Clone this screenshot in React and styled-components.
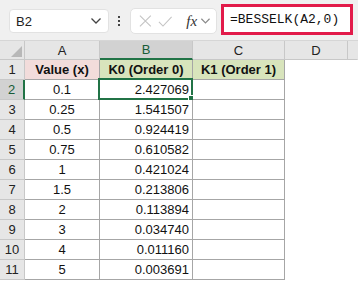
import styled, { createGlobalStyle } from "styled-components";

const GlobalStyle = createGlobalStyle`
  html, body {
    margin: 0;
    padding: 0;
    background: #fff;
  }
  body {
    font-family: "Liberation Sans", Arial, sans-serif;
    width: 358px;
    height: 282px;
    overflow: hidden;
  }
`;

const rows = [
  ["0.1", "2.427069"],
  ["0.25", "1.541507"],
  ["0.5", "0.924419"],
  ["0.75", "0.610582"],
  ["1", "0.421024"],
  ["1.5", "0.213806"],
  ["2", "0.113894"],
  ["3", "0.034740"],
  ["4", "0.011160"],
  ["5", "0.003691"],
];

function Chevron({ color = "#444" }) {
  return (
    <svg width="12" height="8" viewBox="0 0 12 8">
      <path d="M1.5 1.5 L6 6 L10.5 1.5" fill="none" stroke={color} strokeWidth="1.3" />
    </svg>
  );
}

function App() {
  return (
    <Page>
      <GlobalStyle />
      <Toolbar>
        <NameBox>
          <span>B2</span>
          <Chevron />
        </NameBox>
        <Dots>
          <i />
          <i />
          <i />
        </Dots>
        <FxBox>
          <svg width="14" height="14" viewBox="0 0 14 14">
            <path d="M1 1 L13 13 M13 1 L1 13" stroke="#c4c4c4" strokeWidth="1.2" />
          </svg>
          <svg width="16" height="13" viewBox="0 0 16 13">
            <path d="M1 7 L5.5 11.5 L15 1.5" fill="none" stroke="#c4c4c4" strokeWidth="1.2" />
          </svg>
          <FxLabel>fx</FxLabel>
          <Chevron color="#8a8a8a" />
        </FxBox>
        <Formula>=BESSELK(A2,0)</Formula>
      </Toolbar>

      <Sheet>
        <Corner />
        <ColHead>A</ColHead>
        <ColHead $active>B</ColHead>
        <ColHead>C</ColHead>
        <ColHead>D</ColHead>
        <ColHead $last />

        <RowHead>1</RowHead>
        <Cell $bg="#f2dcdb" $bold $align="center">Value (x)</Cell>
        <Cell $bg="#d8e4bc" $bold $align="center">K0 (Order 0)</Cell>
        <Cell $bg="#d8e4bc" $bold $align="center">K1 (Order 1)</Cell>
        <Blank />
        <Blank />

        {rows.map(([x, k0], i) => {
          const n = i + 2;
          return [
            <RowHead key={`h${n}`} $active={n === 2}>{n}</RowHead>,
            <Cell key={`a${n}`} $align="center">{x}</Cell>,
            <Cell key={`b${n}`} $align="right">
              {k0}
              {n === 2 && (
                <Selection>
                  <Handle />
                </Selection>
              )}
            </Cell>,
            <Cell key={`c${n}`} />,
            <Blank key={`d${n}`} />,
            <Blank key={`e${n}`} />,
          ];
        })}
      </Sheet>
    </Page>
  );
}

const Page = styled.div`
  width: 358px;
  height: 282px;
  overflow: hidden;
  display: flex;
  flex-direction: column;
`;

const Toolbar = styled.div`
  height: 40px;
  flex-shrink: 0;
  background: #f0f0f0;
  border-bottom: 1px solid #d6d6d6;
  display: flex;
  align-items: flex-start;
  box-sizing: border-box;
  height: 41px;
`;

const NameBox = styled.div`
  margin: 9px 0 0 9px;
  width: 100px;
  height: 24px;
  box-sizing: border-box;
  background: #fff;
  border: 1px solid #e2e2e2;
  border-radius: 4px;
  display: flex;
  align-items: center;
  justify-content: space-between;
  padding: 0 6px 0 6px;
  font-size: 13px;
  color: #222;
`;

const Dots = styled.div`
  margin: 16px 0 0 9px;
  width: 3px;
  display: flex;
  flex-direction: column;
  gap: 2px;
  i {
    display: block;
    width: 2px;
    height: 2px;
    background: #444;
  }
`;

const FxBox = styled.div`
  margin: 8px 0 0 9px;
  width: 87px;
  height: 26px;
  box-sizing: border-box;
  background: #fff;
  border: 1px solid #e2e2e2;
  border-radius: 5px;
  display: flex;
  align-items: center;
  gap: 6px;
  padding: 0 5px 0 8px;
`;

const FxLabel = styled.span`
  font-family: "Liberation Serif", "Times New Roman", serif;
  font-style: italic;
  font-size: 15px;
  color: #333;
  margin-left: 8px;
  margin-right: -3px;
`;

const Formula = styled.div`
  margin: 4px 0 0 4px;
  width: 132px;
  height: 31px;
  box-sizing: border-box;
  background: #fff;
  border: 3px solid #e21b4a;
  display: flex;
  align-items: center;
  padding-left: 6px;
  font-family: "Liberation Mono", "DejaVu Sans Mono", monospace;
  font-size: 13px;
  color: #111;
`;

const Sheet = styled.div`
  display: grid;
  grid-template-columns: 25px 75px 93px 92px 63px 1fr;
  grid-template-rows: 19px repeat(11, 20px);
  font-size: 13px;
  color: #111;
`;

const Corner = styled.div`
  background: #e6e6e6;
  border-right: 1px solid #c8c8c8;
  border-bottom: 1px solid #c8c8c8;
  position: relative;
  &::after {
    content: "";
    position: absolute;
    right: 2px;
    bottom: 2px;
    border-style: solid;
    border-width: 0 0 11px 11px;
    border-color: transparent transparent #b8b8b8 transparent;
  }
`;

const ColHead = styled.div`
  background: ${(p) => (p.$active ? "#d2d2d2" : "#e6e6e6")};
  color: ${(p) => (p.$active ? "#185c37" : "#222")};
  border-right: 1px solid ${(p) => (p.$last ? "transparent" : "#c8c8c8")};
  border-bottom: ${(p) => (p.$active ? "2px solid #217346" : "1px solid #c8c8c8")};
  display: flex;
  align-items: center;
  justify-content: center;
  box-sizing: border-box;
`;

const RowHead = styled.div`
  background: ${(p) => (p.$active ? "#d2d2d2" : "#e6e6e6")};
  color: ${(p) => (p.$active ? "#185c37" : "#222")};
  border-right: ${(p) => (p.$active ? "2px solid #217346" : "1px solid #c8c8c8")};
  border-bottom: 1px solid #c8c8c8;
  display: flex;
  align-items: center;
  justify-content: center;
  box-sizing: border-box;
`;

const Cell = styled.div`
  position: relative;
  background: ${(p) => p.$bg || "#fff"};
  font-weight: ${(p) => (p.$bold ? 700 : 400)};
  border-right: 1px solid #a6a6a6;
  border-bottom: 1px solid #a6a6a6;
  display: flex;
  align-items: center;
  justify-content: ${(p) =>
    p.$align === "right" ? "flex-end" : p.$align === "center" ? "center" : "flex-start"};
  padding: 0 3px;
  box-sizing: border-box;
  white-space: nowrap;
`;

const Blank = styled.div`
  background: #fff;
`;

const Selection = styled.div`
  position: absolute;
  left: -2px;
  top: -2px;
  right: -1px;
  bottom: -1px;
  border: 2px solid #217346;
  pointer-events: none;
`;

const Handle = styled.div`
  position: absolute;
  right: -5px;
  bottom: -5px;
  width: 6px;
  height: 6px;
  background: #217346;
  border: 1px solid #fff;
`;

export default App;
